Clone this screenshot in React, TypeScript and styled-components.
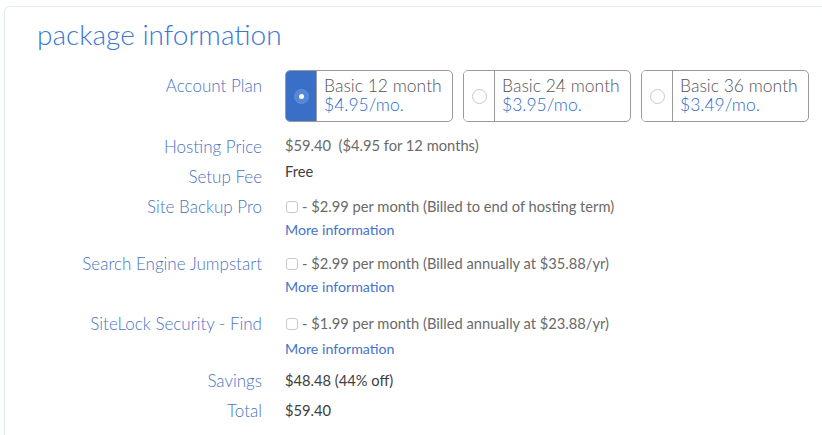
import React from "react";
import styled, { createGlobalStyle } from "styled-components";

const Global = createGlobalStyle`
  html, body { margin: 0; padding: 0; background: #ffffff; }
  body { font-family: Lato, "Open Sans", Arial, sans-serif; -webkit-font-smoothing: antialiased; }
  * { box-sizing: border-box; }
`;

const Panel = styled.section`
  margin: 6px 0 0 4px;
  border: 1px solid #e3ebf5;
  border-right: none;
  border-bottom: none;
  border-radius: 6px 0 0 0;
  padding: 11px 0 20px 0;
  min-height: 429px;
`;

const Title = styled.h2`
  margin: 0 0 19px 32px;
  font-size: 28px;
  line-height: 33px;
  font-weight: 300;
  color: #3a77d2;
`;

const Rows = styled.div`
  display: flex;
  flex-direction: column;
  gap: 7px;
`;

const Row = styled.div<{ $extra?: number }>`
  display: flex;
  align-items: flex-start;
  gap: 23px;
  margin-bottom: ${(p) => p.$extra ?? 0}px;
`;

const Label = styled.div<{ $pad?: number }>`
  width: 257px;
  flex: none;
  text-align: right;
  font-size: 17px;
  line-height: 23px;
  font-weight: 300;
  color: #4a74c2;
  padding-top: ${(p) => p.$pad ?? 0}px;
`;

const Value = styled.div<{ $dark?: boolean; $lift?: number }>`
  font-size: 14.7px;
  line-height: 23px;
  color: ${(p) => (p.$dark ? "#404040" : "#6a6a6a")};
  margin-top: ${(p) => -(p.$lift ?? 0)}px;
`;

const Plans = styled.div`
  display: flex;
  gap: 10px;
  margin-bottom: 6px;
`;

const Card = styled.div`
  width: 168px;
  height: 52px;
  display: flex;
  border: 1px solid #9a9a9a;
  border-radius: 5px;
  overflow: hidden;
  background: #fff;
`;

const RadioCell = styled.div<{ $on?: boolean }>`
  width: 31px;
  flex: none;
  display: flex;
  align-items: center;
  justify-content: center;
  border-right: 1px solid #9a9a9a;
  background: ${(p) => (p.$on ? "#3a6fc7" : "#fff")};
`;

const Radio = styled.span<{ $on?: boolean }>`
  width: 15px;
  height: 15px;
  border-radius: 50%;
  display: flex;
  align-items: center;
  justify-content: center;
  border: 1px solid ${(p) => (p.$on ? "#5f8fdc" : "#c9c9c9")};
  background: ${(p) => (p.$on ? "#5687d6" : "#fff")};
  &::after {
    content: "";
    display: ${(p) => (p.$on ? "block" : "none")};
    width: 5px;
    height: 5px;
    border-radius: 50%;
    background: #fff;
  }
`;

const CardText = styled.div`
  padding: 5px 0 0 7px;
  font-size: 17.5px;
  line-height: 19px;
  font-weight: 300;
  color: #555555;
`;

const CardPrice = styled.div`
  color: #2f6acc;
`;

const CheckLine = styled.div`
  display: flex;
  align-items: center;
  gap: 4px;
`;

const Box = styled.span`
  width: 12px;
  height: 12px;
  flex: none;
  border: 1px solid #c8c8c8;
  border-radius: 3px;
  background: #fff;
  margin-left: 1px;
`;

const Link = styled.a`
  display: block;
  font-size: 14.2px;
  color: #4673c8;
  text-decoration: none;
  cursor: pointer;
`;

const plans = [
  { name: "Basic 12 month", price: "$4.95/mo.", on: true },
  { name: "Basic 24 month", price: "$3.95/mo.", on: false },
  { name: "Basic 36 month", price: "$3.49/mo.", on: false },
];

const addons = [
  { label: "Site Backup Pro", text: "- $2.99 per month (Billed to end of hosting term)", extra: 4, gap: 0 },
  { label: "Search Engine Jumpstart", text: "- $2.99 per month (Billed annually at $35.88/yr)", extra: 7, gap: 0 },
  { label: "SiteLock Security - Find", text: "- $1.99 per month (Billed annually at $23.88/yr)", extra: 2, gap: 2 },
];

const LinkWrap = styled.div<{ $gap: number }>`
  margin-top: ${(p) => p.$gap}px;
`;

export default function App() {
  return (
    <>
      <Global />
      <Panel>
        <Title>package information</Title>
        <Rows>
          <Row>
            <Label $pad={4}>Account Plan</Label>
            <Plans>
              {plans.map((p) => (
                <Card key={p.name}>
                  <RadioCell $on={p.on}>
                    <Radio $on={p.on} />
                  </RadioCell>
                  <CardText>
                    {p.name}
                    <CardPrice>{p.price}</CardPrice>
                  </CardText>
                </Card>
              ))}
            </Plans>
          </Row>
          <Row>
            <Label>Hosting Price</Label>
            <Value $lift={1}>$59.40&nbsp; ($4.95 for 12 months)</Value>
          </Row>
          <Row>
            <Label>Setup Fee</Label>
            <Value $dark $lift={5}>Free</Value>
          </Row>
          {addons.map((a) => (
            <Row key={a.label} $extra={a.extra}>
              <Label>{a.label}</Label>
              <Value>
                <CheckLine>
                  <Box />
                  {a.text}
                </CheckLine>
                <LinkWrap $gap={a.gap}>
                  <Link>More information</Link>
                </LinkWrap>
              </Value>
            </Row>
          ))}
          <Row>
            <Label>Savings</Label>
            <Value $dark>$48.48 (44% off)</Value>
          </Row>
          <Row>
            <Label>Total</Label>
            <Value $dark>$59.40</Value>
          </Row>
        </Rows>
      </Panel>
    </>
  );
}
